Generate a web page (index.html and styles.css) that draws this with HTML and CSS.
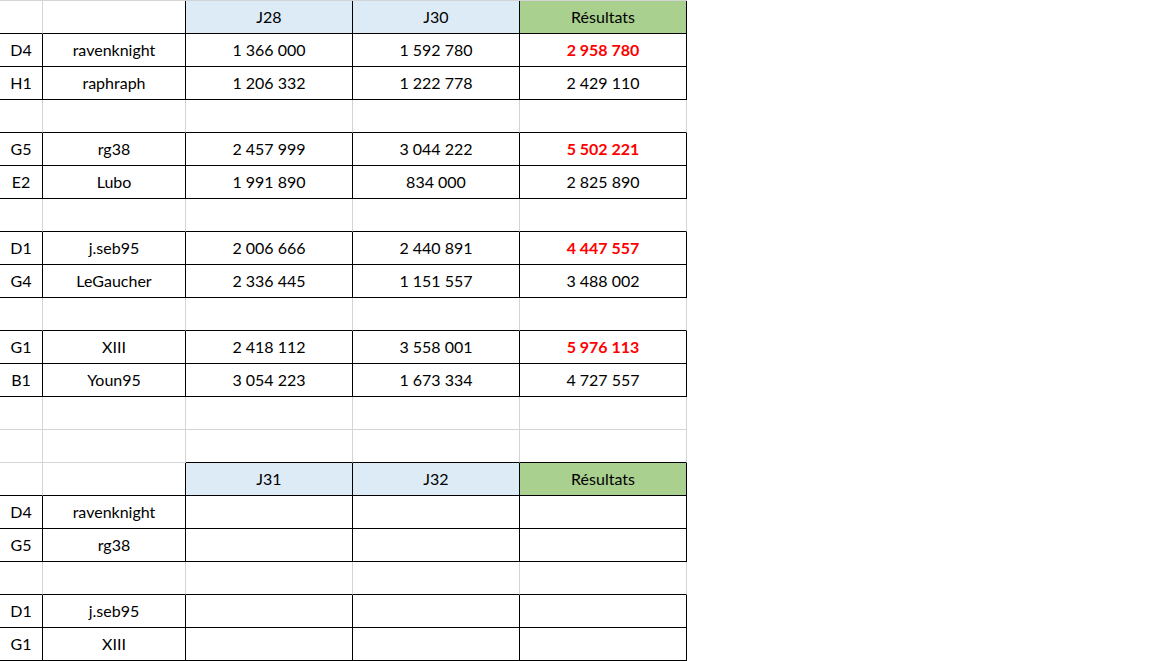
FILE: index.html
```html
<!DOCTYPE html>
<html lang="fr">
<head>
<meta charset="utf-8">
<title>Résultats</title>
<link rel="stylesheet" href="styles.css">
</head>
<body>
<div class="sheet">
  <div class="row hdr"><div class="cell"></div><div class="cell"></div><div class="cell blue">J28</div><div class="cell blue">J30</div><div class="cell green">Résultats</div></div>
  <div class="row data"><div class="cell">D4</div><div class="cell">ravenknight</div><div class="cell">1 366 000</div><div class="cell">1 592 780</div><div class="cell win">2 958 780</div></div>
  <div class="row data"><div class="cell">H1</div><div class="cell">raphraph</div><div class="cell">1 206 332</div><div class="cell">1 222 778</div><div class="cell">2 429 110</div></div>
  <div class="row sep"><div class="cell"></div><div class="cell"></div><div class="cell"></div><div class="cell"></div><div class="cell"></div></div>
  <div class="row data"><div class="cell">G5</div><div class="cell">rg38</div><div class="cell">2 457 999</div><div class="cell">3 044 222</div><div class="cell win">5 502 221</div></div>
  <div class="row data"><div class="cell">E2</div><div class="cell">Lubo</div><div class="cell">1 991 890</div><div class="cell">834 000</div><div class="cell">2 825 890</div></div>
  <div class="row sep"><div class="cell"></div><div class="cell"></div><div class="cell"></div><div class="cell"></div><div class="cell"></div></div>
  <div class="row data"><div class="cell">D1</div><div class="cell">j.seb95</div><div class="cell">2 006 666</div><div class="cell">2 440 891</div><div class="cell win">4 447 557</div></div>
  <div class="row data"><div class="cell">G4</div><div class="cell">LeGaucher</div><div class="cell">2 336 445</div><div class="cell">1 151 557</div><div class="cell">3 488 002</div></div>
  <div class="row sep"><div class="cell"></div><div class="cell"></div><div class="cell"></div><div class="cell"></div><div class="cell"></div></div>
  <div class="row data"><div class="cell">G1</div><div class="cell">XIII</div><div class="cell">2 418 112</div><div class="cell">3 558 001</div><div class="cell win">5 976 113</div></div>
  <div class="row data"><div class="cell">B1</div><div class="cell">Youn95</div><div class="cell">3 054 223</div><div class="cell">1 673 334</div><div class="cell">4 727 557</div></div>
  <div class="row empty"><div class="cell"></div><div class="cell"></div><div class="cell"></div><div class="cell"></div><div class="cell"></div></div>
  <div class="row pre"><div class="cell"></div><div class="cell"></div><div class="cell"></div><div class="cell"></div><div class="cell"></div></div>
  <div class="row hdr"><div class="cell"></div><div class="cell"></div><div class="cell blue">J31</div><div class="cell blue">J32</div><div class="cell green">Résultats</div></div>
  <div class="row data"><div class="cell">D4</div><div class="cell">ravenknight</div><div class="cell"></div><div class="cell"></div><div class="cell"></div></div>
  <div class="row data"><div class="cell">G5</div><div class="cell">rg38</div><div class="cell"></div><div class="cell"></div><div class="cell"></div></div>
  <div class="row sep"><div class="cell"></div><div class="cell"></div><div class="cell"></div><div class="cell"></div><div class="cell"></div></div>
  <div class="row data"><div class="cell">D1</div><div class="cell">j.seb95</div><div class="cell"></div><div class="cell"></div><div class="cell"></div></div>
  <div class="row data"><div class="cell">G1</div><div class="cell">XIII</div><div class="cell"></div><div class="cell"></div><div class="cell"></div></div>
</div>
</body>
</html>
```

FILE: styles.css
```css
html, body {
  margin: 0;
  padding: 0;
  background: #ffffff;
}

.sheet {
  display: grid;
  grid-template-columns: 43px 143px 167px 167px 167px;
  grid-auto-rows: 33px;
  width: 687px;
  border-top: 1px solid #d4d4d4;
  font-family: Lato, "Open Sans", "Liberation Sans", sans-serif;
  font-size: 16px;
  color: #000000;
}

.row {
  display: contents;
}

.cell {
  box-sizing: border-box;
  border-right: 1px solid #d4d4d4;
  border-bottom: 1px solid #d4d4d4;
  text-align: center;
  line-height: 31px;
  white-space: nowrap;
  overflow: hidden;
}

.blue {
  background: #ddebf7;
}

.green {
  background: #a9d08e;
}

.win {
  color: #ff0000;
  font-weight: 700;
}

.hdr > .cell {
  border-bottom-color: #000000;
}

.hdr > .cell:not(:first-child) {
  border-right-color: #000000;
}

.data > .cell {
  border-right-color: #000000;
  border-bottom-color: #000000;
}

.sep > .cell {
  border-bottom-color: #000000;
}

.pre > .cell:nth-child(n+3) {
  border-bottom-color: #000000;
}
```
